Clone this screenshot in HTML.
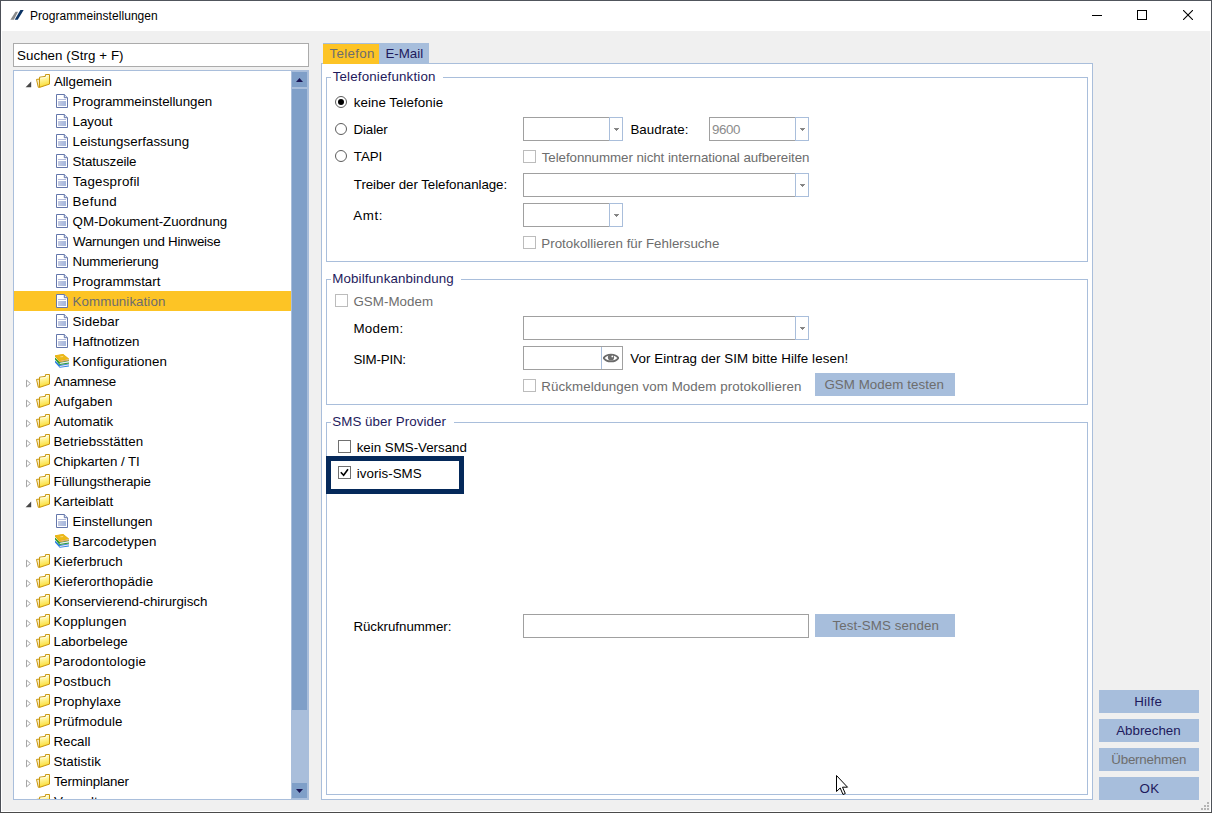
<!DOCTYPE html>
<html lang="de"><head><meta charset="utf-8"><title>Programmeinstellungen</title>
<style>
html,body{margin:0;padding:0;}
body{width:1212px;height:813px;overflow:hidden;background:#f0f0f0;position:relative;font-family:"Liberation Sans",Arial,sans-serif;font-size:13.33px;color:#000;}
.a{position:absolute;}
.t{position:absolute;white-space:nowrap;line-height:20px;height:20px;}
.nv{color:#1e1a5c;}
.gy{color:#6d6d6d;}
.row{position:absolute;left:0;width:277px;height:20px;}
.row .t{top:1px;}
.gb{position:absolute;border:1px solid #a9bedb;box-sizing:border-box;}
.gl{position:absolute;background:#fff;height:14px;}
.btn{position:absolute;background:#a7bedc;height:23px;}
.cb{position:absolute;width:13px;height:13px;box-sizing:border-box;border:1px solid #707070;background:#fff;}
.cb.d{border-color:#bcbcbc;}
.rd{position:absolute;width:12px;height:12px;box-sizing:border-box;border:1px solid #5c5c5c;border-radius:50%;background:#fff;}
.combo{position:absolute;height:24px;box-sizing:border-box;background:#fff;border:1px solid #a0a0a0;border-right-color:#a9bedb;}
.combo .dd{position:absolute;right:-1px;top:-1px;bottom:-1px;width:14px;box-sizing:border-box;border:1px solid #a9bedb;}
.combo .ar{position:absolute;right:3px;top:10px;width:5px;height:1px;background:#8a8a8a;}
.combo .ar::before{content:'';position:absolute;left:1px;top:1px;width:3px;height:1px;background:#7e7e7e;}
.combo .ar::after{content:'';position:absolute;left:2px;top:2px;width:1px;height:1px;background:#8a8a8a;}
.inp{position:absolute;box-sizing:border-box;background:#fff;border:1px solid #a0a0a0;}
</style></head>
<body>
<svg width="0" height="0" style="position:absolute"><defs>
<linearGradient id="gf" x1="0.3" y1="0" x2="0.5" y2="1"><stop offset="0" stop-color="#fffef0"/><stop offset="0.35" stop-color="#fff6a0"/><stop offset="0.8" stop-color="#fbe24a"/><stop offset="1" stop-color="#f3c41c"/></linearGradient>
<linearGradient id="gd" x1="0" y1="0" x2="1" y2="0"><stop offset="0" stop-color="#c3cae2"/><stop offset="1" stop-color="#a4b6dc"/></linearGradient>
</defs></svg>
<div class="a" style="left:1px;top:1px;width:1210px;height:811px;background:#fff"></div>
<div class="a" style="left:2px;top:31px;width:1208px;height:780px;background:#f0f0f0"></div>
<div class="a" style="left:0;top:0;width:1212px;height:1px;background:#50555c"></div>
<div class="a" style="left:0;top:0;width:1px;height:813px;background:#4c4f57"></div>
<div class="a" style="left:1211px;top:0;width:1px;height:813px;background:#4e5259"></div>
<div class="a" style="left:0;top:812px;width:1212px;height:1px;background:#4a4a4a"></div>
<svg class="a" style="left:9px;top:9px" width="16" height="12" viewBox="0 0 16 12"><path d="M1.4 10.8 L6.5 2.8 H9 L4.9 10.8Z" fill="#8a8a8a"/><path d="M5.7 10.8 L11.4 1 H14.7 L8.7 10.8Z" fill="#0b3364"/></svg>
<div class="t" style="left:30px;top:6px;font-size:12px;letter-spacing:0.05px;">Programmeinstellungen</div>
<div class="a" style="left:1092px;top:15px;width:10px;height:1px;background:#000"></div>
<div class="a" style="left:1137px;top:10px;width:10px;height:10px;box-sizing:border-box;border:1px solid #000"></div>
<svg class="a" style="left:1183px;top:10px" width="10" height="10" viewBox="0 0 10 10"><path d="M0 0 L10 10 M10 0 L0 10" stroke="#000" stroke-width="1.1"/></svg>
<div class="inp" style="left:13px;top:43px;width:296px;height:24px;border-color:#ababab"></div>
<div class="t" style="left:17px;top:46px;letter-spacing:0.06px;">Suchen (Strg + F)</div>
<div class="a" style="left:13px;top:70px;width:296px;height:730px;box-sizing:border-box;border:1px solid #a9bedb;background:#fff;overflow:hidden">
<div class="a" style="left:0;top:0;width:277px;height:728px;overflow:hidden">
<div class="row" style="top:0px;">
<svg class="a" style="left:11px;top:10px" width="7" height="7" viewBox="0 0 7 7"><path d="M6.2 0.6 V6.2 H0.6Z" fill="#484848"/></svg>
<svg class="a" style="left:22px;top:3px" width="14" height="14" viewBox="0 0 14 14"><path d="M0.5 5.4 L3.4 5.1 L3.4 13.3 L2.3 13.3 Z" fill="#fff6cf" stroke="#c8960c" stroke-width="1" stroke-linejoin="round"/><path d="M3.5 3.2 L9.4 2.4 L9.4 0.6 L13.5 0.5 L13.5 10.1 L3.5 13.4 Z" fill="url(#gf)" stroke="#c8960c" stroke-width="1" stroke-linejoin="round"/><path d="M4.6 4.2 L10.4 3.4 L10.4 1.6 L12.5 1.5" fill="none" stroke="#fffdf0" stroke-width="0.8" opacity="0.9"/></svg>
<span class="t" style="left:39.9px;letter-spacing:-0.06px;">Allgemein</span></div>
<div class="row" style="top:20px;">
<svg class="a" style="left:42px;top:3px" width="12" height="14" viewBox="0 0 12 14"><path d="M0.5 0.5 H8.3 L11.5 3.7 V13.5 H0.5 Z" fill="#fff" stroke="#6577ab" stroke-width="1" stroke-linejoin="round"/><path d="M8.3 0.5 V3.7 H11.5" fill="#dfe6f5" stroke="#6577ab" stroke-width="1"/><rect x="2" y="5" width="8" height="1" fill="#b5bcda"/><rect x="2" y="7" width="8" height="5" fill="url(#gd)"/></svg>
<span class="t" style="left:58.6px;letter-spacing:-0.06px;">Programmeinstellungen</span></div>
<div class="row" style="top:40px;">
<svg class="a" style="left:42px;top:3px" width="12" height="14" viewBox="0 0 12 14"><path d="M0.5 0.5 H8.3 L11.5 3.7 V13.5 H0.5 Z" fill="#fff" stroke="#6577ab" stroke-width="1" stroke-linejoin="round"/><path d="M8.3 0.5 V3.7 H11.5" fill="#dfe6f5" stroke="#6577ab" stroke-width="1"/><rect x="2" y="5" width="8" height="1" fill="#b5bcda"/><rect x="2" y="7" width="8" height="5" fill="url(#gd)"/></svg>
<span class="t" style="left:58.6px;letter-spacing:-0.04px;">Layout</span></div>
<div class="row" style="top:60px;">
<svg class="a" style="left:42px;top:3px" width="12" height="14" viewBox="0 0 12 14"><path d="M0.5 0.5 H8.3 L11.5 3.7 V13.5 H0.5 Z" fill="#fff" stroke="#6577ab" stroke-width="1" stroke-linejoin="round"/><path d="M8.3 0.5 V3.7 H11.5" fill="#dfe6f5" stroke="#6577ab" stroke-width="1"/><rect x="2" y="5" width="8" height="1" fill="#b5bcda"/><rect x="2" y="7" width="8" height="5" fill="url(#gd)"/></svg>
<span class="t" style="left:58.6px;letter-spacing:0.06px;">Leistungserfassung</span></div>
<div class="row" style="top:80px;">
<svg class="a" style="left:42px;top:3px" width="12" height="14" viewBox="0 0 12 14"><path d="M0.5 0.5 H8.3 L11.5 3.7 V13.5 H0.5 Z" fill="#fff" stroke="#6577ab" stroke-width="1" stroke-linejoin="round"/><path d="M8.3 0.5 V3.7 H11.5" fill="#dfe6f5" stroke="#6577ab" stroke-width="1"/><rect x="2" y="5" width="8" height="1" fill="#b5bcda"/><rect x="2" y="7" width="8" height="5" fill="url(#gd)"/></svg>
<span class="t" style="left:58.6px;letter-spacing:-0.13px;">Statuszeile</span></div>
<div class="row" style="top:100px;">
<svg class="a" style="left:42px;top:3px" width="12" height="14" viewBox="0 0 12 14"><path d="M0.5 0.5 H8.3 L11.5 3.7 V13.5 H0.5 Z" fill="#fff" stroke="#6577ab" stroke-width="1" stroke-linejoin="round"/><path d="M8.3 0.5 V3.7 H11.5" fill="#dfe6f5" stroke="#6577ab" stroke-width="1"/><rect x="2" y="5" width="8" height="1" fill="#b5bcda"/><rect x="2" y="7" width="8" height="5" fill="url(#gd)"/></svg>
<span class="t" style="left:59.0px;letter-spacing:0.21px;">Tagesprofil</span></div>
<div class="row" style="top:120px;">
<svg class="a" style="left:42px;top:3px" width="12" height="14" viewBox="0 0 12 14"><path d="M0.5 0.5 H8.3 L11.5 3.7 V13.5 H0.5 Z" fill="#fff" stroke="#6577ab" stroke-width="1" stroke-linejoin="round"/><path d="M8.3 0.5 V3.7 H11.5" fill="#dfe6f5" stroke="#6577ab" stroke-width="1"/><rect x="2" y="5" width="8" height="1" fill="#b5bcda"/><rect x="2" y="7" width="8" height="5" fill="url(#gd)"/></svg>
<span class="t" style="left:58.6px;letter-spacing:0.38px;">Befund</span></div>
<div class="row" style="top:140px;">
<svg class="a" style="left:42px;top:3px" width="12" height="14" viewBox="0 0 12 14"><path d="M0.5 0.5 H8.3 L11.5 3.7 V13.5 H0.5 Z" fill="#fff" stroke="#6577ab" stroke-width="1" stroke-linejoin="round"/><path d="M8.3 0.5 V3.7 H11.5" fill="#dfe6f5" stroke="#6577ab" stroke-width="1"/><rect x="2" y="5" width="8" height="1" fill="#b5bcda"/><rect x="2" y="7" width="8" height="5" fill="url(#gd)"/></svg>
<span class="t" style="left:58.6px;letter-spacing:-0.05px;">QM-Dokument-Zuordnung</span></div>
<div class="row" style="top:160px;">
<svg class="a" style="left:42px;top:3px" width="12" height="14" viewBox="0 0 12 14"><path d="M0.5 0.5 H8.3 L11.5 3.7 V13.5 H0.5 Z" fill="#fff" stroke="#6577ab" stroke-width="1" stroke-linejoin="round"/><path d="M8.3 0.5 V3.7 H11.5" fill="#dfe6f5" stroke="#6577ab" stroke-width="1"/><rect x="2" y="5" width="8" height="1" fill="#b5bcda"/><rect x="2" y="7" width="8" height="5" fill="url(#gd)"/></svg>
<span class="t" style="left:59.0px;letter-spacing:-0.21px;">Warnungen und Hinweise</span></div>
<div class="row" style="top:180px;">
<svg class="a" style="left:42px;top:3px" width="12" height="14" viewBox="0 0 12 14"><path d="M0.5 0.5 H8.3 L11.5 3.7 V13.5 H0.5 Z" fill="#fff" stroke="#6577ab" stroke-width="1" stroke-linejoin="round"/><path d="M8.3 0.5 V3.7 H11.5" fill="#dfe6f5" stroke="#6577ab" stroke-width="1"/><rect x="2" y="5" width="8" height="1" fill="#b5bcda"/><rect x="2" y="7" width="8" height="5" fill="url(#gd)"/></svg>
<span class="t" style="left:58.6px;letter-spacing:-0.18px;">Nummerierung</span></div>
<div class="row" style="top:200px;">
<svg class="a" style="left:42px;top:3px" width="12" height="14" viewBox="0 0 12 14"><path d="M0.5 0.5 H8.3 L11.5 3.7 V13.5 H0.5 Z" fill="#fff" stroke="#6577ab" stroke-width="1" stroke-linejoin="round"/><path d="M8.3 0.5 V3.7 H11.5" fill="#dfe6f5" stroke="#6577ab" stroke-width="1"/><rect x="2" y="5" width="8" height="1" fill="#b5bcda"/><rect x="2" y="7" width="8" height="5" fill="url(#gd)"/></svg>
<span class="t" style="left:58.6px;letter-spacing:-0.03px;">Programmstart</span></div>
<div class="row" style="top:220px;background:#fdc425;">
<svg class="a" style="left:42px;top:3px" width="12" height="14" viewBox="0 0 12 14"><path d="M0.5 0.5 H8.3 L11.5 3.7 V13.5 H0.5 Z" fill="#fff" stroke="#6577ab" stroke-width="1" stroke-linejoin="round"/><path d="M8.3 0.5 V3.7 H11.5" fill="#dfe6f5" stroke="#6577ab" stroke-width="1"/><rect x="2" y="5" width="8" height="1" fill="#b5bcda"/><rect x="2" y="7" width="8" height="5" fill="url(#gd)"/></svg>
<span class="t gy" style="left:58.6px;letter-spacing:0.07px;">Kommunikation</span></div>
<div class="row" style="top:240px;">
<svg class="a" style="left:42px;top:3px" width="12" height="14" viewBox="0 0 12 14"><path d="M0.5 0.5 H8.3 L11.5 3.7 V13.5 H0.5 Z" fill="#fff" stroke="#6577ab" stroke-width="1" stroke-linejoin="round"/><path d="M8.3 0.5 V3.7 H11.5" fill="#dfe6f5" stroke="#6577ab" stroke-width="1"/><rect x="2" y="5" width="8" height="1" fill="#b5bcda"/><rect x="2" y="7" width="8" height="5" fill="url(#gd)"/></svg>
<span class="t" style="left:58.6px;letter-spacing:0.12px;">Sidebar</span></div>
<div class="row" style="top:260px;">
<svg class="a" style="left:42px;top:3px" width="12" height="14" viewBox="0 0 12 14"><path d="M0.5 0.5 H8.3 L11.5 3.7 V13.5 H0.5 Z" fill="#fff" stroke="#6577ab" stroke-width="1" stroke-linejoin="round"/><path d="M8.3 0.5 V3.7 H11.5" fill="#dfe6f5" stroke="#6577ab" stroke-width="1"/><rect x="2" y="5" width="8" height="1" fill="#b5bcda"/><rect x="2" y="7" width="8" height="5" fill="url(#gd)"/></svg>
<span class="t" style="left:58.6px;letter-spacing:-0.05px;">Haftnotizen</span></div>
<div class="row" style="top:280px;">
<svg class="a" style="left:41px;top:3px" width="14" height="14" viewBox="0 0 14 14"><path d="M0 6.6 L0 8.4 L4.7 13.8 L13.9 12.4 L13.9 9.4 L4.7 11 Z" fill="#2a7fe0"/><path d="M4.7 11.9 L13.9 10.2 L13.9 11.6 L4.7 13 Z" fill="#eae6f6"/><path d="M0 3.6 L0 5.6 L4.6 10.9 L14 9.4 L14 6.2 L4.7 7.9 Z" fill="#2c9a2e"/><path d="M4.7 8.8 L14 7 L14 8.5 L4.7 10.1 Z" fill="#eee9f6"/><path d="M0 1.3 L0 2.6 L4.6 7.9 L14.1 6.1 L14.1 4.8 L8.2 0.1 Z" fill="#e4ac12"/><path d="M4.7 6.9 L14.1 4.9 L14.1 5.7 L4.7 7.6 Z" fill="#e6def0"/><path d="M4.7 7.7 L14.1 5.9" stroke="#e08a2c" stroke-width="0.6"/><path d="M0.3 1.4 L8.1 0.3 L13.8 4.7 L4.8 6.6 Z" fill="#ecb91a"/><path d="M5.2 2.6 L8 2.2 L8.4 2.9 L5.6 3.3Z" fill="#f6e3a0"/></svg>
<span class="t" style="left:58.6px;letter-spacing:0.06px;">Konfigurationen</span></div>
<div class="row" style="top:300px;">
<svg class="a" style="left:12px;top:8px" width="6" height="9" viewBox="0 0 6 9"><path d="M0.5 1.1 L4.4 4.5 L0.5 7.9Z" fill="#fff" stroke="#a6a6a6" stroke-width="1"/></svg>
<svg class="a" style="left:22px;top:3px" width="14" height="14" viewBox="0 0 14 14"><path d="M0.5 5.4 L3.4 5.1 L3.4 13.3 L2.3 13.3 Z" fill="#fff6cf" stroke="#c8960c" stroke-width="1" stroke-linejoin="round"/><path d="M3.5 3.2 L9.4 2.4 L9.4 0.6 L13.5 0.5 L13.5 10.1 L3.5 13.4 Z" fill="url(#gf)" stroke="#c8960c" stroke-width="1" stroke-linejoin="round"/><path d="M4.6 4.2 L10.4 3.4 L10.4 1.6 L12.5 1.5" fill="none" stroke="#fffdf0" stroke-width="0.8" opacity="0.9"/></svg>
<span class="t" style="left:39.9px;letter-spacing:-0.21px;">Anamnese</span></div>
<div class="row" style="top:320px;">
<svg class="a" style="left:12px;top:8px" width="6" height="9" viewBox="0 0 6 9"><path d="M0.5 1.1 L4.4 4.5 L0.5 7.9Z" fill="#fff" stroke="#a6a6a6" stroke-width="1"/></svg>
<svg class="a" style="left:22px;top:3px" width="14" height="14" viewBox="0 0 14 14"><path d="M0.5 5.4 L3.4 5.1 L3.4 13.3 L2.3 13.3 Z" fill="#fff6cf" stroke="#c8960c" stroke-width="1" stroke-linejoin="round"/><path d="M3.5 3.2 L9.4 2.4 L9.4 0.6 L13.5 0.5 L13.5 10.1 L3.5 13.4 Z" fill="url(#gf)" stroke="#c8960c" stroke-width="1" stroke-linejoin="round"/><path d="M4.6 4.2 L10.4 3.4 L10.4 1.6 L12.5 1.5" fill="none" stroke="#fffdf0" stroke-width="0.8" opacity="0.9"/></svg>
<span class="t" style="left:39.9px;letter-spacing:0.2px;">Aufgaben</span></div>
<div class="row" style="top:340px;">
<svg class="a" style="left:12px;top:8px" width="6" height="9" viewBox="0 0 6 9"><path d="M0.5 1.1 L4.4 4.5 L0.5 7.9Z" fill="#fff" stroke="#a6a6a6" stroke-width="1"/></svg>
<svg class="a" style="left:22px;top:3px" width="14" height="14" viewBox="0 0 14 14"><path d="M0.5 5.4 L3.4 5.1 L3.4 13.3 L2.3 13.3 Z" fill="#fff6cf" stroke="#c8960c" stroke-width="1" stroke-linejoin="round"/><path d="M3.5 3.2 L9.4 2.4 L9.4 0.6 L13.5 0.5 L13.5 10.1 L3.5 13.4 Z" fill="url(#gf)" stroke="#c8960c" stroke-width="1" stroke-linejoin="round"/><path d="M4.6 4.2 L10.4 3.4 L10.4 1.6 L12.5 1.5" fill="none" stroke="#fffdf0" stroke-width="0.8" opacity="0.9"/></svg>
<span class="t" style="left:39.9px;">Automatik</span></div>
<div class="row" style="top:360px;">
<svg class="a" style="left:12px;top:8px" width="6" height="9" viewBox="0 0 6 9"><path d="M0.5 1.1 L4.4 4.5 L0.5 7.9Z" fill="#fff" stroke="#a6a6a6" stroke-width="1"/></svg>
<svg class="a" style="left:22px;top:3px" width="14" height="14" viewBox="0 0 14 14"><path d="M0.5 5.4 L3.4 5.1 L3.4 13.3 L2.3 13.3 Z" fill="#fff6cf" stroke="#c8960c" stroke-width="1" stroke-linejoin="round"/><path d="M3.5 3.2 L9.4 2.4 L9.4 0.6 L13.5 0.5 L13.5 10.1 L3.5 13.4 Z" fill="url(#gf)" stroke="#c8960c" stroke-width="1" stroke-linejoin="round"/><path d="M4.6 4.2 L10.4 3.4 L10.4 1.6 L12.5 1.5" fill="none" stroke="#fffdf0" stroke-width="0.8" opacity="0.9"/></svg>
<span class="t" style="left:39.5px;letter-spacing:0.06px;">Betriebsstätten</span></div>
<div class="row" style="top:380px;">
<svg class="a" style="left:12px;top:8px" width="6" height="9" viewBox="0 0 6 9"><path d="M0.5 1.1 L4.4 4.5 L0.5 7.9Z" fill="#fff" stroke="#a6a6a6" stroke-width="1"/></svg>
<svg class="a" style="left:22px;top:3px" width="14" height="14" viewBox="0 0 14 14"><path d="M0.5 5.4 L3.4 5.1 L3.4 13.3 L2.3 13.3 Z" fill="#fff6cf" stroke="#c8960c" stroke-width="1" stroke-linejoin="round"/><path d="M3.5 3.2 L9.4 2.4 L9.4 0.6 L13.5 0.5 L13.5 10.1 L3.5 13.4 Z" fill="url(#gf)" stroke="#c8960c" stroke-width="1" stroke-linejoin="round"/><path d="M4.6 4.2 L10.4 3.4 L10.4 1.6 L12.5 1.5" fill="none" stroke="#fffdf0" stroke-width="0.8" opacity="0.9"/></svg>
<span class="t" style="left:39.5px;letter-spacing:-0.07px;">Chipkarten / TI</span></div>
<div class="row" style="top:400px;">
<svg class="a" style="left:12px;top:8px" width="6" height="9" viewBox="0 0 6 9"><path d="M0.5 1.1 L4.4 4.5 L0.5 7.9Z" fill="#fff" stroke="#a6a6a6" stroke-width="1"/></svg>
<svg class="a" style="left:22px;top:3px" width="14" height="14" viewBox="0 0 14 14"><path d="M0.5 5.4 L3.4 5.1 L3.4 13.3 L2.3 13.3 Z" fill="#fff6cf" stroke="#c8960c" stroke-width="1" stroke-linejoin="round"/><path d="M3.5 3.2 L9.4 2.4 L9.4 0.6 L13.5 0.5 L13.5 10.1 L3.5 13.4 Z" fill="url(#gf)" stroke="#c8960c" stroke-width="1" stroke-linejoin="round"/><path d="M4.6 4.2 L10.4 3.4 L10.4 1.6 L12.5 1.5" fill="none" stroke="#fffdf0" stroke-width="0.8" opacity="0.9"/></svg>
<span class="t" style="left:39.5px;letter-spacing:-0.07px;">Füllungstherapie</span></div>
<div class="row" style="top:420px;">
<svg class="a" style="left:11px;top:10px" width="7" height="7" viewBox="0 0 7 7"><path d="M6.2 0.6 V6.2 H0.6Z" fill="#484848"/></svg>
<svg class="a" style="left:22px;top:3px" width="14" height="14" viewBox="0 0 14 14"><path d="M0.5 5.4 L3.4 5.1 L3.4 13.3 L2.3 13.3 Z" fill="#fff6cf" stroke="#c8960c" stroke-width="1" stroke-linejoin="round"/><path d="M3.5 3.2 L9.4 2.4 L9.4 0.6 L13.5 0.5 L13.5 10.1 L3.5 13.4 Z" fill="url(#gf)" stroke="#c8960c" stroke-width="1" stroke-linejoin="round"/><path d="M4.6 4.2 L10.4 3.4 L10.4 1.6 L12.5 1.5" fill="none" stroke="#fffdf0" stroke-width="0.8" opacity="0.9"/></svg>
<span class="t" style="left:39.5px;letter-spacing:-0.03px;">Karteiblatt</span></div>
<div class="row" style="top:440px;">
<svg class="a" style="left:42px;top:3px" width="12" height="14" viewBox="0 0 12 14"><path d="M0.5 0.5 H8.3 L11.5 3.7 V13.5 H0.5 Z" fill="#fff" stroke="#6577ab" stroke-width="1" stroke-linejoin="round"/><path d="M8.3 0.5 V3.7 H11.5" fill="#dfe6f5" stroke="#6577ab" stroke-width="1"/><rect x="2" y="5" width="8" height="1" fill="#b5bcda"/><rect x="2" y="7" width="8" height="5" fill="url(#gd)"/></svg>
<span class="t" style="left:58.6px;letter-spacing:-0.01px;">Einstellungen</span></div>
<div class="row" style="top:460px;">
<svg class="a" style="left:41px;top:3px" width="14" height="14" viewBox="0 0 14 14"><path d="M0 6.6 L0 8.4 L4.7 13.8 L13.9 12.4 L13.9 9.4 L4.7 11 Z" fill="#2a7fe0"/><path d="M4.7 11.9 L13.9 10.2 L13.9 11.6 L4.7 13 Z" fill="#eae6f6"/><path d="M0 3.6 L0 5.6 L4.6 10.9 L14 9.4 L14 6.2 L4.7 7.9 Z" fill="#2c9a2e"/><path d="M4.7 8.8 L14 7 L14 8.5 L4.7 10.1 Z" fill="#eee9f6"/><path d="M0 1.3 L0 2.6 L4.6 7.9 L14.1 6.1 L14.1 4.8 L8.2 0.1 Z" fill="#e4ac12"/><path d="M4.7 6.9 L14.1 4.9 L14.1 5.7 L4.7 7.6 Z" fill="#e6def0"/><path d="M4.7 7.7 L14.1 5.9" stroke="#e08a2c" stroke-width="0.6"/><path d="M0.3 1.4 L8.1 0.3 L13.8 4.7 L4.8 6.6 Z" fill="#ecb91a"/><path d="M5.2 2.6 L8 2.2 L8.4 2.9 L5.6 3.3Z" fill="#f6e3a0"/></svg>
<span class="t" style="left:58.6px;letter-spacing:0.15px;">Barcodetypen</span></div>
<div class="row" style="top:480px;">
<svg class="a" style="left:12px;top:8px" width="6" height="9" viewBox="0 0 6 9"><path d="M0.5 1.1 L4.4 4.5 L0.5 7.9Z" fill="#fff" stroke="#a6a6a6" stroke-width="1"/></svg>
<svg class="a" style="left:22px;top:3px" width="14" height="14" viewBox="0 0 14 14"><path d="M0.5 5.4 L3.4 5.1 L3.4 13.3 L2.3 13.3 Z" fill="#fff6cf" stroke="#c8960c" stroke-width="1" stroke-linejoin="round"/><path d="M3.5 3.2 L9.4 2.4 L9.4 0.6 L13.5 0.5 L13.5 10.1 L3.5 13.4 Z" fill="url(#gf)" stroke="#c8960c" stroke-width="1" stroke-linejoin="round"/><path d="M4.6 4.2 L10.4 3.4 L10.4 1.6 L12.5 1.5" fill="none" stroke="#fffdf0" stroke-width="0.8" opacity="0.9"/></svg>
<span class="t" style="left:39.5px;letter-spacing:0.1px;">Kieferbruch</span></div>
<div class="row" style="top:500px;">
<svg class="a" style="left:12px;top:8px" width="6" height="9" viewBox="0 0 6 9"><path d="M0.5 1.1 L4.4 4.5 L0.5 7.9Z" fill="#fff" stroke="#a6a6a6" stroke-width="1"/></svg>
<svg class="a" style="left:22px;top:3px" width="14" height="14" viewBox="0 0 14 14"><path d="M0.5 5.4 L3.4 5.1 L3.4 13.3 L2.3 13.3 Z" fill="#fff6cf" stroke="#c8960c" stroke-width="1" stroke-linejoin="round"/><path d="M3.5 3.2 L9.4 2.4 L9.4 0.6 L13.5 0.5 L13.5 10.1 L3.5 13.4 Z" fill="url(#gf)" stroke="#c8960c" stroke-width="1" stroke-linejoin="round"/><path d="M4.6 4.2 L10.4 3.4 L10.4 1.6 L12.5 1.5" fill="none" stroke="#fffdf0" stroke-width="0.8" opacity="0.9"/></svg>
<span class="t" style="left:39.5px;letter-spacing:0.12px;">Kieferorthopädie</span></div>
<div class="row" style="top:520px;">
<svg class="a" style="left:12px;top:8px" width="6" height="9" viewBox="0 0 6 9"><path d="M0.5 1.1 L4.4 4.5 L0.5 7.9Z" fill="#fff" stroke="#a6a6a6" stroke-width="1"/></svg>
<svg class="a" style="left:22px;top:3px" width="14" height="14" viewBox="0 0 14 14"><path d="M0.5 5.4 L3.4 5.1 L3.4 13.3 L2.3 13.3 Z" fill="#fff6cf" stroke="#c8960c" stroke-width="1" stroke-linejoin="round"/><path d="M3.5 3.2 L9.4 2.4 L9.4 0.6 L13.5 0.5 L13.5 10.1 L3.5 13.4 Z" fill="url(#gf)" stroke="#c8960c" stroke-width="1" stroke-linejoin="round"/><path d="M4.6 4.2 L10.4 3.4 L10.4 1.6 L12.5 1.5" fill="none" stroke="#fffdf0" stroke-width="0.8" opacity="0.9"/></svg>
<span class="t" style="left:39.5px;letter-spacing:-0.04px;">Konservierend-chirurgisch</span></div>
<div class="row" style="top:540px;">
<svg class="a" style="left:12px;top:8px" width="6" height="9" viewBox="0 0 6 9"><path d="M0.5 1.1 L4.4 4.5 L0.5 7.9Z" fill="#fff" stroke="#a6a6a6" stroke-width="1"/></svg>
<svg class="a" style="left:22px;top:3px" width="14" height="14" viewBox="0 0 14 14"><path d="M0.5 5.4 L3.4 5.1 L3.4 13.3 L2.3 13.3 Z" fill="#fff6cf" stroke="#c8960c" stroke-width="1" stroke-linejoin="round"/><path d="M3.5 3.2 L9.4 2.4 L9.4 0.6 L13.5 0.5 L13.5 10.1 L3.5 13.4 Z" fill="url(#gf)" stroke="#c8960c" stroke-width="1" stroke-linejoin="round"/><path d="M4.6 4.2 L10.4 3.4 L10.4 1.6 L12.5 1.5" fill="none" stroke="#fffdf0" stroke-width="0.8" opacity="0.9"/></svg>
<span class="t" style="left:39.5px;letter-spacing:0.2px;">Kopplungen</span></div>
<div class="row" style="top:560px;">
<svg class="a" style="left:12px;top:8px" width="6" height="9" viewBox="0 0 6 9"><path d="M0.5 1.1 L4.4 4.5 L0.5 7.9Z" fill="#fff" stroke="#a6a6a6" stroke-width="1"/></svg>
<svg class="a" style="left:22px;top:3px" width="14" height="14" viewBox="0 0 14 14"><path d="M0.5 5.4 L3.4 5.1 L3.4 13.3 L2.3 13.3 Z" fill="#fff6cf" stroke="#c8960c" stroke-width="1" stroke-linejoin="round"/><path d="M3.5 3.2 L9.4 2.4 L9.4 0.6 L13.5 0.5 L13.5 10.1 L3.5 13.4 Z" fill="url(#gf)" stroke="#c8960c" stroke-width="1" stroke-linejoin="round"/><path d="M4.6 4.2 L10.4 3.4 L10.4 1.6 L12.5 1.5" fill="none" stroke="#fffdf0" stroke-width="0.8" opacity="0.9"/></svg>
<span class="t" style="left:39.5px;letter-spacing:0.01px;">Laborbelege</span></div>
<div class="row" style="top:580px;">
<svg class="a" style="left:12px;top:8px" width="6" height="9" viewBox="0 0 6 9"><path d="M0.5 1.1 L4.4 4.5 L0.5 7.9Z" fill="#fff" stroke="#a6a6a6" stroke-width="1"/></svg>
<svg class="a" style="left:22px;top:3px" width="14" height="14" viewBox="0 0 14 14"><path d="M0.5 5.4 L3.4 5.1 L3.4 13.3 L2.3 13.3 Z" fill="#fff6cf" stroke="#c8960c" stroke-width="1" stroke-linejoin="round"/><path d="M3.5 3.2 L9.4 2.4 L9.4 0.6 L13.5 0.5 L13.5 10.1 L3.5 13.4 Z" fill="url(#gf)" stroke="#c8960c" stroke-width="1" stroke-linejoin="round"/><path d="M4.6 4.2 L10.4 3.4 L10.4 1.6 L12.5 1.5" fill="none" stroke="#fffdf0" stroke-width="0.8" opacity="0.9"/></svg>
<span class="t" style="left:39.5px;letter-spacing:0.22px;">Parodontologie</span></div>
<div class="row" style="top:600px;">
<svg class="a" style="left:12px;top:8px" width="6" height="9" viewBox="0 0 6 9"><path d="M0.5 1.1 L4.4 4.5 L0.5 7.9Z" fill="#fff" stroke="#a6a6a6" stroke-width="1"/></svg>
<svg class="a" style="left:22px;top:3px" width="14" height="14" viewBox="0 0 14 14"><path d="M0.5 5.4 L3.4 5.1 L3.4 13.3 L2.3 13.3 Z" fill="#fff6cf" stroke="#c8960c" stroke-width="1" stroke-linejoin="round"/><path d="M3.5 3.2 L9.4 2.4 L9.4 0.6 L13.5 0.5 L13.5 10.1 L3.5 13.4 Z" fill="url(#gf)" stroke="#c8960c" stroke-width="1" stroke-linejoin="round"/><path d="M4.6 4.2 L10.4 3.4 L10.4 1.6 L12.5 1.5" fill="none" stroke="#fffdf0" stroke-width="0.8" opacity="0.9"/></svg>
<span class="t" style="left:39.5px;letter-spacing:0.27px;">Postbuch</span></div>
<div class="row" style="top:620px;">
<svg class="a" style="left:12px;top:8px" width="6" height="9" viewBox="0 0 6 9"><path d="M0.5 1.1 L4.4 4.5 L0.5 7.9Z" fill="#fff" stroke="#a6a6a6" stroke-width="1"/></svg>
<svg class="a" style="left:22px;top:3px" width="14" height="14" viewBox="0 0 14 14"><path d="M0.5 5.4 L3.4 5.1 L3.4 13.3 L2.3 13.3 Z" fill="#fff6cf" stroke="#c8960c" stroke-width="1" stroke-linejoin="round"/><path d="M3.5 3.2 L9.4 2.4 L9.4 0.6 L13.5 0.5 L13.5 10.1 L3.5 13.4 Z" fill="url(#gf)" stroke="#c8960c" stroke-width="1" stroke-linejoin="round"/><path d="M4.6 4.2 L10.4 3.4 L10.4 1.6 L12.5 1.5" fill="none" stroke="#fffdf0" stroke-width="0.8" opacity="0.9"/></svg>
<span class="t" style="left:39.5px;letter-spacing:0.08px;">Prophylaxe</span></div>
<div class="row" style="top:640px;">
<svg class="a" style="left:12px;top:8px" width="6" height="9" viewBox="0 0 6 9"><path d="M0.5 1.1 L4.4 4.5 L0.5 7.9Z" fill="#fff" stroke="#a6a6a6" stroke-width="1"/></svg>
<svg class="a" style="left:22px;top:3px" width="14" height="14" viewBox="0 0 14 14"><path d="M0.5 5.4 L3.4 5.1 L3.4 13.3 L2.3 13.3 Z" fill="#fff6cf" stroke="#c8960c" stroke-width="1" stroke-linejoin="round"/><path d="M3.5 3.2 L9.4 2.4 L9.4 0.6 L13.5 0.5 L13.5 10.1 L3.5 13.4 Z" fill="url(#gf)" stroke="#c8960c" stroke-width="1" stroke-linejoin="round"/><path d="M4.6 4.2 L10.4 3.4 L10.4 1.6 L12.5 1.5" fill="none" stroke="#fffdf0" stroke-width="0.8" opacity="0.9"/></svg>
<span class="t" style="left:39.5px;letter-spacing:0.09px;">Prüfmodule</span></div>
<div class="row" style="top:660px;">
<svg class="a" style="left:12px;top:8px" width="6" height="9" viewBox="0 0 6 9"><path d="M0.5 1.1 L4.4 4.5 L0.5 7.9Z" fill="#fff" stroke="#a6a6a6" stroke-width="1"/></svg>
<svg class="a" style="left:22px;top:3px" width="14" height="14" viewBox="0 0 14 14"><path d="M0.5 5.4 L3.4 5.1 L3.4 13.3 L2.3 13.3 Z" fill="#fff6cf" stroke="#c8960c" stroke-width="1" stroke-linejoin="round"/><path d="M3.5 3.2 L9.4 2.4 L9.4 0.6 L13.5 0.5 L13.5 10.1 L3.5 13.4 Z" fill="url(#gf)" stroke="#c8960c" stroke-width="1" stroke-linejoin="round"/><path d="M4.6 4.2 L10.4 3.4 L10.4 1.6 L12.5 1.5" fill="none" stroke="#fffdf0" stroke-width="0.8" opacity="0.9"/></svg>
<span class="t" style="left:39.5px;letter-spacing:-0.04px;">Recall</span></div>
<div class="row" style="top:680px;">
<svg class="a" style="left:12px;top:8px" width="6" height="9" viewBox="0 0 6 9"><path d="M0.5 1.1 L4.4 4.5 L0.5 7.9Z" fill="#fff" stroke="#a6a6a6" stroke-width="1"/></svg>
<svg class="a" style="left:22px;top:3px" width="14" height="14" viewBox="0 0 14 14"><path d="M0.5 5.4 L3.4 5.1 L3.4 13.3 L2.3 13.3 Z" fill="#fff6cf" stroke="#c8960c" stroke-width="1" stroke-linejoin="round"/><path d="M3.5 3.2 L9.4 2.4 L9.4 0.6 L13.5 0.5 L13.5 10.1 L3.5 13.4 Z" fill="url(#gf)" stroke="#c8960c" stroke-width="1" stroke-linejoin="round"/><path d="M4.6 4.2 L10.4 3.4 L10.4 1.6 L12.5 1.5" fill="none" stroke="#fffdf0" stroke-width="0.8" opacity="0.9"/></svg>
<span class="t" style="left:39.5px;letter-spacing:0.09px;">Statistik</span></div>
<div class="row" style="top:700px;">
<svg class="a" style="left:12px;top:8px" width="6" height="9" viewBox="0 0 6 9"><path d="M0.5 1.1 L4.4 4.5 L0.5 7.9Z" fill="#fff" stroke="#a6a6a6" stroke-width="1"/></svg>
<svg class="a" style="left:22px;top:3px" width="14" height="14" viewBox="0 0 14 14"><path d="M0.5 5.4 L3.4 5.1 L3.4 13.3 L2.3 13.3 Z" fill="#fff6cf" stroke="#c8960c" stroke-width="1" stroke-linejoin="round"/><path d="M3.5 3.2 L9.4 2.4 L9.4 0.6 L13.5 0.5 L13.5 10.1 L3.5 13.4 Z" fill="url(#gf)" stroke="#c8960c" stroke-width="1" stroke-linejoin="round"/><path d="M4.6 4.2 L10.4 3.4 L10.4 1.6 L12.5 1.5" fill="none" stroke="#fffdf0" stroke-width="0.8" opacity="0.9"/></svg>
<span class="t" style="left:39.9px;letter-spacing:-0.18px;">Terminplaner</span></div>
<div class="row" style="top:720px;">
<svg class="a" style="left:12px;top:8px" width="6" height="9" viewBox="0 0 6 9"><path d="M0.5 1.1 L4.4 4.5 L0.5 7.9Z" fill="#fff" stroke="#a6a6a6" stroke-width="1"/></svg>
<svg class="a" style="left:22px;top:3px" width="14" height="14" viewBox="0 0 14 14"><path d="M0.5 5.4 L3.4 5.1 L3.4 13.3 L2.3 13.3 Z" fill="#fff6cf" stroke="#c8960c" stroke-width="1" stroke-linejoin="round"/><path d="M3.5 3.2 L9.4 2.4 L9.4 0.6 L13.5 0.5 L13.5 10.1 L3.5 13.4 Z" fill="url(#gf)" stroke="#c8960c" stroke-width="1" stroke-linejoin="round"/><path d="M4.6 4.2 L10.4 3.4 L10.4 1.6 L12.5 1.5" fill="none" stroke="#fffdf0" stroke-width="0.8" opacity="0.9"/></svg>
<span class="t" style="left:39.9px;">Verwaltung</span></div>
</div>
<div class="a" style="left:277px;top:0;width:17px;height:728px;background:#a9bedb"></div>
<div class="a" style="left:278px;top:1px;width:15px;height:15px;background:#7f9fc8"></div>
<svg class="a" style="left:278px;top:1px" width="15" height="15" viewBox="0 0 15 15"><path d="M4 10 H11 L7.5 6Z" fill="#1a1654"/></svg>
<div class="a" style="left:278px;top:18px;width:15px;height:621px;background:#7f9fc8"></div>
<div class="a" style="left:278px;top:712px;width:15px;height:15px;background:#7f9fc8"></div>
<svg class="a" style="left:278px;top:712px" width="15" height="15" viewBox="0 0 15 15"><path d="M4 6 H11 L7.5 10Z" fill="#1a1654"/></svg>
</div>
<div class="a" style="left:321px;top:63px;width:772px;height:737px;box-sizing:border-box;border:1px solid #a9bedb;background:#fff"></div>
<div class="a" style="left:323px;top:43px;width:106px;height:21px;background:#a7bedc"></div>
<div class="a" style="left:323px;top:44px;width:56px;height:20px;background:#fdc425"></div>
<div class="t gy" style="left:329.6px;top:44px;letter-spacing:0.32px;">Telefon</div>
<div class="t nv" style="left:385.4px;top:44px;">E-Mail</div>
<div class="gb" style="left:326px;top:77px;width:762px;height:185px"></div>
<div class="gl" style="left:331px;top:71px;width:112px"></div>
<div class="t nv" style="left:332.7px;top:67px;letter-spacing:0.17px;">Telefoniefunktion</div>
<div class="gb" style="left:326px;top:279px;width:762px;height:126px"></div>
<div class="gl" style="left:331px;top:273px;width:130px"></div>
<div class="t nv" style="left:332.3px;top:269px;letter-spacing:0.12px;">Mobilfunkanbindung</div>
<div class="gb" style="left:326px;top:422px;width:762px;height:373px"></div>
<div class="gl" style="left:331px;top:416px;width:123px"></div>
<div class="t nv" style="left:332.3px;top:412px;letter-spacing:0.06px;">SMS über Provider</div>
<div class="rd" style="left:335px;top:96px"></div>
<div class="a" style="left:338px;top:99px;width:6px;height:6px;border-radius:50%;background:#000"></div>
<div class="t" style="left:353.7px;top:93px;letter-spacing:0.06px;">keine Telefonie</div>
<div class="rd" style="left:335px;top:123px"></div>
<div class="t" style="left:353.4px;top:120px;letter-spacing:-0.08px;">Dialer</div>
<div class="rd" style="left:335px;top:150px"></div>
<div class="t" style="left:353.8px;top:147px;letter-spacing:-0.07px;">TAPI</div>
<div class="combo" style="left:523px;top:117px;width:100px"><div class="dd"></div><div class="ar"></div></div>
<div class="t" style="left:630.4px;top:120px;letter-spacing:0.03px;">Baudrate:</div>
<div class="combo" style="left:709px;top:117px;width:100px"><div class="dd"></div><div class="ar"></div></div>
<div class="t" style="left:712.1px;top:120px;letter-spacing:-0.43px;color:#8c8c8c;">9600</div>
<div class="cb d" style="left:523px;top:150px"></div>
<div class="t gy" style="left:541.7px;top:148px;letter-spacing:-0.06px;">Telefonnummer nicht international aufbereiten</div>
<div class="t" style="left:353.8px;top:175px;letter-spacing:-0.06px;">Treiber der Telefonanlage:</div>
<div class="combo" style="left:523px;top:173px;width:286px"><div class="dd"></div><div class="ar"></div></div>
<div class="t" style="left:353.3px;top:206px;letter-spacing:0.6px;">Amt:</div>
<div class="combo" style="left:523px;top:203px;width:100px"><div class="dd"></div><div class="ar"></div></div>
<div class="cb d" style="left:523px;top:236px"></div>
<div class="t gy" style="left:541.3px;top:234px;letter-spacing:0.01px;">Protokollieren für Fehlersuche</div>
<div class="cb d" style="left:335px;top:294px"></div>
<div class="t gy" style="left:353.4px;top:292px;letter-spacing:0.05px;">GSM-Modem</div>
<div class="t" style="left:353.4px;top:319px;letter-spacing:0.34px;">Modem:</div>
<div class="combo" style="left:523px;top:316px;width:286px"><div class="dd"></div><div class="ar"></div></div>
<div class="t" style="left:353.4px;top:350px;letter-spacing:-0.2px;">SIM-PIN:</div>
<div class="inp" style="left:523px;top:346px;width:100px;height:24px"></div>
<div class="a" style="left:601px;top:347px;width:1px;height:22px;background:#a9bedb"></div>
<svg class="a" style="left:603px;top:353px" width="16" height="10" viewBox="0 0 16 10"><path d="M0.6 5 C3.5 0.4 12.5 0.4 15.4 5 C12.5 9.6 3.5 9.6 0.6 5Z" fill="#fff" stroke="#6a6a6a" stroke-width="1.8"/><circle cx="8" cy="4.4" r="3.1" fill="#6e6e6e"/><circle cx="9.3" cy="3.4" r="0.9" fill="#fff"/></svg>
<div class="t" style="left:630.3px;top:349px;letter-spacing:0.08px;">Vor Eintrag der SIM bitte Hilfe lesen!</div>
<div class="cb d" style="left:523px;top:379px"></div>
<div class="t gy" style="left:541.3px;top:377px;letter-spacing:0.08px;">Rückmeldungen vom Modem protokollieren</div>
<div class="btn" style="left:815px;top:373px;width:140px;"></div>
<div class="t gy" style="left:824.4px;top:375px;letter-spacing:0.06px;">GSM Modem testen</div>
<div class="cb" style="left:338px;top:440px"></div>
<div class="t" style="left:356.7px;top:438px;letter-spacing:-0.01px;">kein SMS-Versand</div>
<div class="cb" style="left:338px;top:466px"></div>
<svg class="a" style="left:338px;top:466px" width="13" height="13" viewBox="0 0 13 13"><path d="M2.8 6.3 L5.6 9.2 L10 3.2" fill="none" stroke="#000" stroke-width="1.6"/></svg>
<div class="t" style="left:356.7px;top:464px;letter-spacing:0.06px;">ivoris-SMS</div>
<div class="a" style="left:326px;top:456px;width:138px;height:38px;box-sizing:border-box;border:5px solid #05295a"></div>
<div class="t" style="left:353.4px;top:617px;letter-spacing:-0.04px;">Rückrufnummer:</div>
<div class="inp" style="left:523px;top:614px;width:286px;height:24px"></div>
<div class="btn" style="left:815px;top:614px;width:140px;"></div>
<div class="t gy" style="left:832.4px;top:616px;letter-spacing:0.09px;">Test-SMS senden</div>
<div class="btn" style="left:1099px;top:690px;width:100px;"></div>
<div class="t nv" style="left:1134.2px;top:692px;letter-spacing:0.27px;">Hilfe</div>
<div class="btn" style="left:1099px;top:719px;width:100px;"></div>
<div class="t nv" style="left:1116.2px;top:721px;">Abbrechen</div>
<div class="btn" style="left:1099px;top:748px;width:100px;"></div>
<div class="t gy" style="left:1111.3px;top:750px;letter-spacing:-0.21px;">Übernehmen</div>
<div class="btn" style="left:1099px;top:777px;width:100px;"></div>
<div class="t nv" style="left:1139.5px;top:779px;letter-spacing:0.3px;">OK</div>
<svg class="a" style="left:1201px;top:802px" width="8" height="8"><rect x="6" y="0" width="2" height="2" fill="#b4b4b4"/><rect x="3" y="3" width="2" height="2" fill="#b4b4b4"/><rect x="6" y="3" width="2" height="2" fill="#b4b4b4"/><rect x="0" y="6" width="2" height="2" fill="#b4b4b4"/><rect x="3" y="6" width="2" height="2" fill="#b4b4b4"/><rect x="6" y="6" width="2" height="2" fill="#b4b4b4"/></svg>
<svg class="a" style="left:836px;top:775px" width="13" height="21" viewBox="0 0 13 21"><path d="M0.5 0.5 V16.5 L4.2 13 L7 19.5 L9.3 18.5 L6.5 12.2 H11.5Z" fill="#fff" stroke="#000" stroke-width="1"/></svg>
</body></html>
